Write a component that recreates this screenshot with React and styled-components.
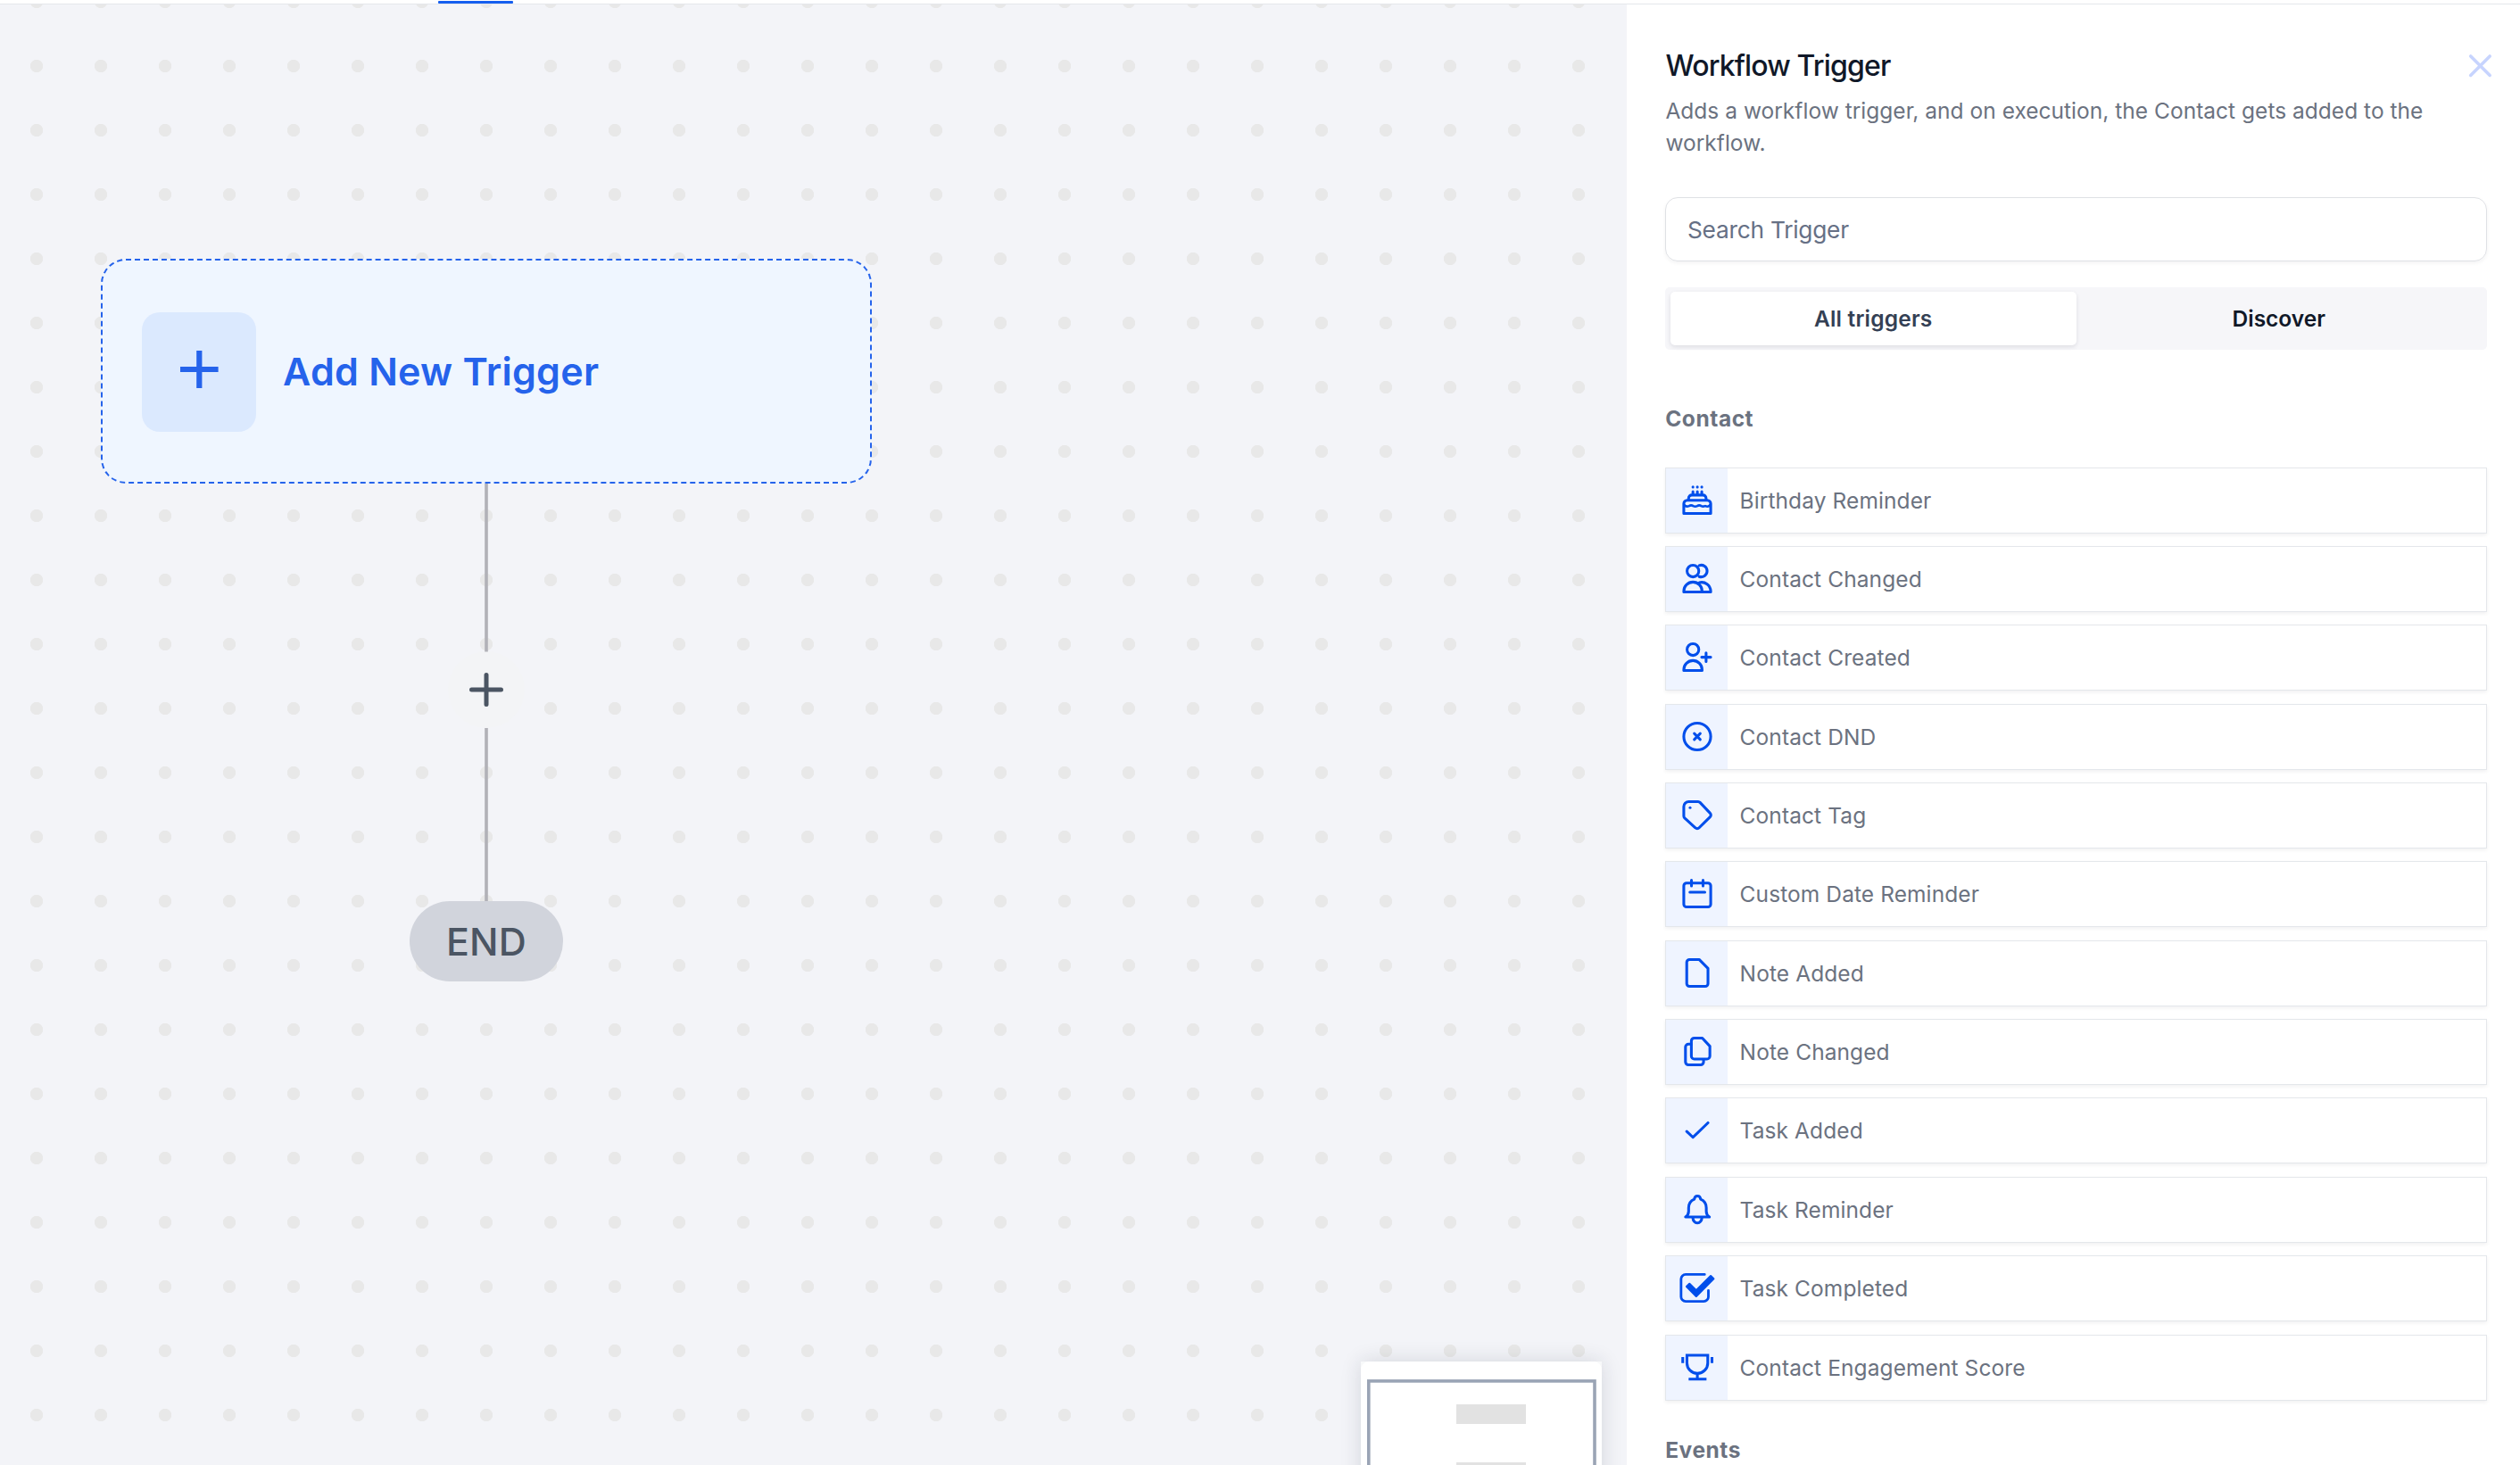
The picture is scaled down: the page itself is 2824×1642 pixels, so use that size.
import React from "react";
import styled, { createGlobalStyle } from "styled-components";

const GlobalStyle = createGlobalStyle`
  *, *::before, *::after { box-sizing: border-box; }
  body {
    margin: 0;
    background: #fff;
    font-family: Inter, "Noto Sans", "Liberation Sans", sans-serif;
  }
`;

const Page = styled.div`
  display: flex;
  flex-direction: column;
  width: 100%;
  height: 1642px;
  overflow: hidden;
`;

const TopBar = styled.header`
  display: flex;
  align-items: flex-end;
  flex: none;
  height: 5px;
  padding-left: 491px;
  background: #fff;
  border-bottom: 1px solid #e5e7eb;
`;

const ActiveUnderline = styled.span`
  width: 84px;
  height: 3px;
  border-radius: 1px;
  background: #155eef;
`;

const Workspace = styled.div`
  display: flex;
  flex: 1;
  min-height: 0;
`;

/* ---------- canvas ---------- */

const Canvas = styled.main`
  position: relative;
  flex: 1;
  overflow: hidden;
  background-color: #f3f4f8;
  background-image: radial-gradient(circle at center, #e8e8e8 6.8px, transparent 7.5px);
  background-size: 72px 72px;
  background-position: 5px 33px;
`;

const Edges = styled.svg`
  position: absolute;
  left: 485px;
  top: 537px;
`;

const TriggerNode = styled.div`
  position: absolute;
  left: 113px;
  top: 285px;
  display: flex;
  align-items: center;
  gap: 30px;
  width: 864px;
  height: 252px;
  padding-left: 44px;
  border: 2px dashed #2563eb;
  border-radius: 28px;
  background: #eff6ff;
`;

const TriggerIcon = styled.div`
  display: flex;
  justify-content: center;
  flex: none;
  width: 128px;
  height: 134px;
  margin-top: 2px;
  padding-top: 42px;
  border-radius: 20px;
  background: #dbe9fe;
`;

const TriggerLabel = styled.span`
  font-size: 43px;
  line-height: 52px;
  font-weight: 600;
  letter-spacing: 0.25px;
  color: #2563eb;
`;

const EndNode = styled.div`
  position: absolute;
  left: 459px;
  top: 1005px;
  display: flex;
  align-items: center;
  justify-content: center;
  width: 172px;
  height: 90px;
  padding-bottom: 1px;
  border-radius: 45px;
  background: #d1d4dc;
  color: #4b5563;
  font-size: 43px;
  line-height: 52px;
  font-weight: 450;
  letter-spacing: 0.1px;
`;

const MiniMap = styled.div`
  position: absolute;
  left: 1525px;
  top: 1521px;
  width: 270px;
  height: 240px;
  background: #f8f9fa;
  box-shadow: 0 0 22px rgba(30, 35, 60, 0.14);
`;

const MiniMapFace = styled.div`
  height: 100%;
  padding: 20px 6px 0 7px;
  border-radius: 9px 9px 0 0;
  background: #fff;
`;

/* ---------- side panel ---------- */

const Panel = styled.aside`
  display: flex;
  flex-direction: column;
  flex: none;
  width: 1001px;
  padding: 46px 37px 0 43px;
  overflow: hidden;
  background: #fff;
`;

const PanelHeader = styled.div`
  display: flex;
  align-items: center;
  justify-content: space-between;
  height: 44px;
  margin-right: -8px;
`;

const Title = styled.h2`
  margin: 1px 0 0;
  padding-left: 0.5px;
  font-size: 32px;
  line-height: 44px;
  font-weight: 500;
  letter-spacing: -0.84px;
  color: #101828;
`;

const CloseButton = styled.button`
  display: flex;
  padding: 0;
  border: 0;
  background: none;
  color: #c7d4fe;
`;

const Description = styled.p`
  margin: 11px 0 0;
  padding-left: 0.4px;
  font-size: 24.5px;
  line-height: 36px;
  letter-spacing: 0.02px;
  color: #6b7280;
`;

const SearchBox = styled.div`
  display: flex;
  align-items: center;
  flex: none;
  height: 72px;
  margin-top: 43px;
  padding: 0 24px;
  border: 1px solid #dfe1e5;
  border-radius: 14px;
  box-shadow: 0 2px 4px rgba(16, 24, 40, 0.05);
  font-size: 26.3px;
  letter-spacing: -0.25px;
  color: #667085;
`;

const Tabs = styled.div`
  display: flex;
  flex: none;
  height: 70px;
  margin-top: 29px;
  padding: 5px 6px;
  border-radius: 5px;
  background: #f6f6f9;
`;

const Tab = styled.button`
  flex: 1;
  padding: 0;
  border: 0;
  border-radius: 5px;
  font-family: inherit;
  font-size: 24.5px;
  line-height: 60px;
  font-weight: 600;
  letter-spacing: ${(p) => (p.$active ? "0.2px" : "0")};
  color: ${(p) => (p.$active ? "#344054" : "#101828")};
  background: ${(p) => (p.$active ? "#fff" : "transparent")};
  box-shadow: ${(p) => (p.$active ? "0 2px 5px rgba(16, 24, 40, 0.1)" : "none")};
`;

const Group = styled.section`
  margin-top: ${(p) => p.$gap}px;
`;

const GroupTitle = styled.h3`
  margin: 0;
  padding-left: 0.2px;
  font-size: 24.5px;
  line-height: 36px;
  font-weight: 700;
  letter-spacing: 0.55px;
  color: #6b7280;
`;

const TriggerList = styled.div`
  display: flex;
  flex-direction: column;
  gap: 14.36px;
  margin-top: 36.6px;
`;

const TriggerRow = styled.div`
  display: flex;
  flex: none;
  height: 74px;
  border: 1px solid #e4e7eb;
  box-shadow: 0 2px 4px rgba(16, 24, 40, 0.06);
`;

const RowIcon = styled.span`
  display: flex;
  align-items: center;
  justify-content: center;
  width: 69px;
  background: #eff4ff;
  color: #004eeb;
`;

const RowLabel = styled.span`
  padding-left: 13.6px;
  font-size: 24.5px;
  line-height: 72px;
  letter-spacing: 0.09px;
  color: #6b7280;
`;

/* Glyphs share a 14-unit grid; the view box leaves room for wider ones. */
function Glyph({ children }) {
  return (
    <svg
      width="42"
      height="42"
      viewBox="-1.91 -1.7 17.82 17.82"
      fill="none"
      stroke="currentColor"
      strokeWidth="1.3"
      strokeLinecap="round"
      strokeLinejoin="round"
    >
      {children}
    </svg>
  );
}

const glyphs = {
  cake: (
    <>
      <path d="M.6 13.4V8.7A1.6 1.6 0 0 1 2.2 7.1H11.8A1.6 1.6 0 0 1 13.4 8.7V13.4Z" />
      <path d="M2.9 7V6.1A1.5 1.5 0 0 1 4.4 4.6H9.7A1.5 1.5 0 0 1 11.2 6.1V7" />
      <path
        d="M.8 9.2C1.4 10.1 2.3 10.2 3.1 9.8 3.9 9.3 4.3 9.3 5.1 9.8 5.8 10.2 6.3 10.2 7 9.8 7.7 9.3 8.2 9.3 8.9 9.8 9.6 10.2 10 10.1 10.8 9.8 11.6 10.2 12.6 10.1 13.2 9.2"
        strokeWidth="1.1"
      />
      <path d="M4.95 3V4.4M7.05 3V4.4M9.15 3V4.4M4.95.75V.8M7.05.75V.8M9.15.75V.8" />
    </>
  ),
  users: (
    <>
      <circle cx="4.95" cy="3.4" r="2.8" />
      <path d="M.6 13.4V13A4.35 4.35 0 0 1 9.3 13V13.4Z" />
      <path d="M7.9.78A2.8 2.8 0 1 1 7.9 6.02" />
      <path d="M8 8.9A4.35 4.35 0 0 1 13.4 13V13.4H9.4" />
    </>
  ),
  userPlus: (
    <>
      <circle cx="4.95" cy="3.4" r="2.8" />
      <path d="M.6 13.4V13A4.35 4.35 0 0 1 9.3 13V13.4Z" />
      <path d="M11.2 5V9.1M9.1 7.05H13.4" />
    </>
  ),
  dnd: (
    <>
      <circle cx="7" cy="7" r="6.4" />
      <path d="M5.6 5.6 8.4 8.4M8.4 5.6 5.6 8.4" />
    </>
  ),
  tag: (
    <>
      <path d="M.6 7.5V3A2.4 2.4 0 0 1 3 .6H7.4A1.3 1.3 0 0 1 8.3 1L13.1 6.1A1.25 1.25 0 0 1 13.1 7.9L7.9 13.05A1.25 1.25 0 0 1 6.1 13.05L1 8.4A1.3 1.3 0 0 1 .6 7.5Z" />
      <circle cx="3.6" cy="3.5" r=".65" fill="currentColor" stroke="none" />
    </>
  ),
  calendar: (
    <>
      <rect x=".6" y="2" width="12.8" height="11.4" rx="1.3" />
      <path d="M4.25.6V3.4M9.75.6V3.4M3.5 6.4H10.6" />
    </>
  ),
  note: (
    <path d="M2 1.9A1.3 1.3 0 0 1 3.3.6H7.9L12.1 4.8V12.1A1.3 1.3 0 0 1 10.8 13.4H3.3A1.3 1.3 0 0 1 2 12.1Z" />
  ),
  notes: (
    <>
      <path d="M4.2 2A1.4 1.4 0 0 1 5.6.6H9.4L13 4.5V9.2A1.4 1.4 0 0 1 11.6 10.6H5.6A1.4 1.4 0 0 1 4.2 9.2Z" />
      <path d="M4 3.5H2.8A1.4 1.4 0 0 0 1.4 4.9V12A1.4 1.4 0 0 0 2.8 13.4H8.6A1.4 1.4 0 0 0 10 12V10.8" />
    </>
  ),
  check: <path d="M2 7.7 4.95 10.5 12.1 3.6" />,
  bell: (
    <>
      <path d="M1.4 10.6H12.8C11.8 10 11.3 9.2 11.3 8V6.3C11.3 4.4 10.3 2.9 8.6 2.2 8.5 1.2 7.9.6 7.1.6S5.7 1.2 5.6 2.2C3.9 2.9 2.9 4.4 2.9 6.3V8C2.9 9.2 2.4 10 1.4 10.6Z" />
      <path d="M4.9 10.9A2.1 2.5 0 0 0 9.2 10.9" />
    </>
  ),
  checkSquare: (
    <>
      <path d="M10.5.6H1.5A2.2 2.2 0 0 0-.7 2.8V11.2A2.2 2.2 0 0 0 1.5 13.4H10.1A2.2 2.2 0 0 0 12.3 11.2V8.2" strokeWidth="1.2" />
      <path d="M3.3 5 6.5 8.2 13.4 1.3 14.8 2.7 6.5 11 1.9 6.4Z" fill="currentColor" strokeWidth=".9" />
    </>
  ),
  trophy: (
    <g strokeLinecap="butt" strokeLinejoin="miter">
      <path d="M2.1 1.3H12V4.95A4.95 4.95 0 0 1 2.1 4.95Z" />
      <path d="M7.05 9.9V12.6M2.9 12.6H11.4M.1 2.1V5M14 2.1V5" />
    </g>
  ),
};

const contactTriggers = [
  ["cake", "Birthday Reminder"],
  ["users", "Contact Changed"],
  ["userPlus", "Contact Created"],
  ["dnd", "Contact DND"],
  ["tag", "Contact Tag"],
  ["calendar", "Custom Date Reminder"],
  ["note", "Note Added"],
  ["notes", "Note Changed"],
  ["check", "Task Added"],
  ["bell", "Task Reminder"],
  ["checkSquare", "Task Completed"],
  ["trophy", "Contact Engagement Score"],
];

function WorkflowCanvas() {
  return (
    <Canvas>
      <Edges width="120" height="468" viewBox="0 0 120 468" fill="none">
        <circle cx="60" cy="231" r="43" fill="#f3f4f6" />
        <path d="M60 0V188.6M60 274V468" stroke="#b1b1b7" strokeWidth="3.6" />
        <path d="M60 214.5V247.5M43.5 231H76.5" stroke="#4b5563" strokeWidth="5" strokeLinecap="round" />
      </Edges>
      <TriggerNode>
        <TriggerIcon>
          <svg width="44" height="44" viewBox="0 0 44 44" stroke="#2563eb" strokeWidth="6.2">
            <path d="M22.3 1V43M1 22H43.6" />
          </svg>
        </TriggerIcon>
        <TriggerLabel>Add New Trigger</TriggerLabel>
      </TriggerNode>
      <EndNode>END</EndNode>
      <MiniMap>
        <MiniMapFace>
          <svg width="257" height="200" viewBox="0 0 257 200">
            <rect x="1.8" y="1.9" width="253.2" height="220" fill="#fff" stroke="#9aa4b5" strokeWidth="3.6" />
            <path d="M100 28H178V50H100ZM100 93H178V115H100Z" fill="#e2e2e2" />
          </svg>
        </MiniMapFace>
      </MiniMap>
    </Canvas>
  );
}

export default function App() {
  return (
    <Page>
      <GlobalStyle />
      <TopBar>
        <ActiveUnderline />
      </TopBar>
      <Workspace>
        <WorkflowCanvas />
        <Panel>
          <PanelHeader>
            <Title>Workflow Trigger</Title>
            <CloseButton aria-label="Close">
              <svg width="31" height="31" viewBox="0 0 31 31" stroke="currentColor" strokeWidth="3.6" strokeLinecap="round">
                <path d="M4.7 4.9 26.2 26.4M26.2 4.9 4.7 26.4" />
              </svg>
            </CloseButton>
          </PanelHeader>
          <Description>
            Adds a workflow trigger, and on execution, the Contact gets added to the workflow.
          </Description>
          <SearchBox>Search Trigger</SearchBox>
          <Tabs>
            <Tab $active>All triggers</Tab>
            <Tab>Discover</Tab>
          </Tabs>
          <Group $gap={59}>
            <GroupTitle>Contact</GroupTitle>
            <TriggerList>
              {contactTriggers.map(([icon, label]) => (
                <TriggerRow key={label}>
                  <RowIcon>
                    <Glyph>{glyphs[icon]}</Glyph>
                  </RowIcon>
                  <RowLabel>{label}</RowLabel>
                </TriggerRow>
              ))}
            </TriggerList>
          </Group>
          <Group $gap={37}>
            <GroupTitle>Events</GroupTitle>
          </Group>
        </Panel>
      </Workspace>
    </Page>
  );
}
